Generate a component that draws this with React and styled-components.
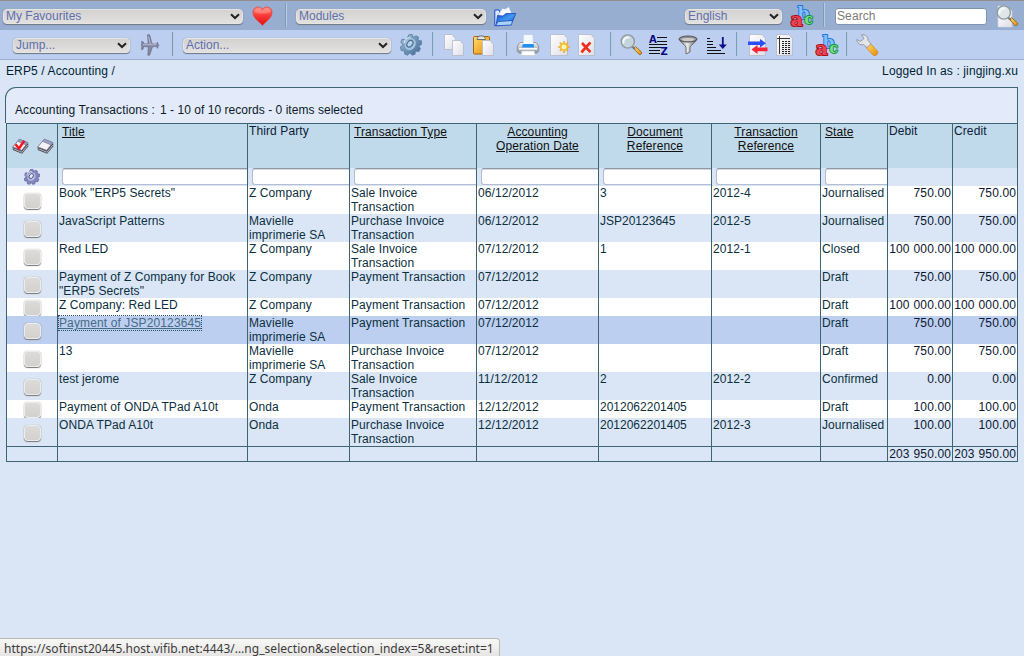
import React from "react";
import styled, { createGlobalStyle } from "styled-components";

const Global = createGlobalStyle`
  * { box-sizing: border-box; }
  html, body { margin: 0; height: 100%; }
  body {
    background: #dae6f6;
    color: #0c2f40;
    font: 12px/14px "Liberation Sans", Arial, sans-serif;
    overflow: hidden;
  }
  #root { height: 100%; }
`;

const Page = styled.div`
  height: 656px;
  width: 1024px;
  display: flex;
  flex-direction: column;
`;
const MainBar = styled.header`
  height: 30px;
  flex: none;
  border-top: 1px solid #8f8e8d;
  background: #97aed0;
  display: flex;
  align-items: flex-start;
  padding-left: 3px;
`;
const ContextBar = styled.nav`
  height: 30px;
  flex: none;
  border-bottom: 1px solid #97aed0;
  background: #bdcff0;
  display: flex;
  align-items: flex-start;
  padding-left: 13px;
`;
const SelectBox = styled.div`
  flex: none;
  width: ${(p) => p.$width}px;
  height: 15px;
  margin: 8px 0 0 ${(p) => p.$gap || 0}px;
  padding: 0 2px;
  border: 1px solid #e6e5e4;
  border-radius: 4px;
  background: linear-gradient(#d3d2d0, #e2e1df);
  box-shadow: 0 1px 1px #6c7685, 0 0 1px #8995a8;
  color: #5f6fae;
  line-height: 13px;
  display: flex;
  justify-content: space-between;
  align-items: center;
`;
const Divider = styled.i`
  flex: none;
  width: 2px;
  height: 24px;
  margin: 2px 0 0 ${(p) => p.$gap}px;
  background: linear-gradient(90deg, #76a0b9 50%, #b9cbe3 50%);
`;
const IconButton = styled.span`
  flex: none;
  width: 22px;
  height: 22px;
  margin: 4px 0 0 ${(p) => p.$gap}px;
  svg { display: block; overflow: visible; }
`;
const SearchInput = styled.input`
  flex: none;
  width: 152px;
  height: 17px;
  margin: 7px 0 0 10px;
  padding: 0 1px 1px;
  border: 1px solid #7f93b3;
  border-radius: 3px;
  background: #fff;
  font: inherit;
  letter-spacing: 0.1px;
  outline: 0;
  &::placeholder { color: #7b7b7b; opacity: 1; }
`;
const Crumbs = styled.div`
  flex: none;
  display: flex;
  justify-content: space-between;
  height: 27px;
  padding: 4px 6px 0;
  color: #001f33;
  letter-spacing: 0.12px;
`;
const Panel = styled.section`
  flex: none;
  height: 36px;
  margin: 0 6px 0 5px;
  padding: 15px 0 0 9px;
  border: 1px solid #3c6473;
  border-bottom: 0;
  border-radius: 11px 0 0 0;
  background: #e3eafa;
  color: #0b1b28;
  display: flex;
  gap: 5px;
`;
const PanelTitle = styled.span`
  letter-spacing: 0.1px;
`;
const PanelCount = styled.span`
  letter-spacing: 0.04px;
`;
const Grid = styled.table`
  flex: none;
  width: 1012px;
  margin-left: 6px;
  table-layout: fixed;
  border-collapse: separate;
  border-spacing: 0;
  border: solid #3c6473;
  border-width: 1px 1px 1px 0;
  letter-spacing: 0.08px;
`;
const Row = styled.tr`
  height: ${(p) => p.$height}px;
  background: ${(p) => p.$bg || "transparent"};
`;
const Cell = styled.td`
  height: inherit;
  padding: 0 0 0 1px;
  border-left: 1px solid #3c6473;
  vertical-align: top;
  letter-spacing: ${(p) => (p.$digits ? "0" : "inherit")};
`;
const NumberCell = styled(Cell)`
  padding: 0 1px 0 0;
  text-align: right;
  white-space: nowrap;
  word-spacing: 0.6px;
  letter-spacing: 0.12px;
  color: #0b1630;
`;
const TotalCell = styled(NumberCell)`
  border-top: 1px solid #3c6473;
`;
const HeadCell = styled.th`
  padding: ${(p) => (p.$sortable ? "1px 4px 0" : "0 0 0 1px")};
  border-left: 1px solid #3c6473;
  vertical-align: top;
  font-weight: normal;
  text-align: ${(p) => (p.$center ? "center" : "left")};
  color: #0c2036;
  letter-spacing: 0.1px;
`;
const SortLink = styled.span`
  color: #101010;
  text-decoration: underline;
`;
const SelectTools = styled.div`
  display: flex;
  gap: 8px;
  padding: 14px 0 0 4px;
`;
const IconCell = styled(Cell)`
  text-align: center;
  padding: 0;
  svg { display: block; margin: 1px auto 0 17px; }
`;
const Filter = styled.div`
  width: calc(100% - 3px);
  height: 17px;
  margin: 0 0 0 3px;
  border: 1px solid #b3bed2;
  border-top: 1px solid #8f96a8;
  border-right: 0;
  border-radius: 3px 0 0 3px;
  box-shadow: inset 0 1px 0 #d5d8e0;
  background: #fff;
`;
const CheckCell = styled(Cell)`
  padding: 1px 0 0;
  vertical-align: middle;
`;
const Check = styled.div`
  width: 17px;
  height: 16px;
  margin: 0 auto 0 17px;
  border: 1px solid #ececeb;
  border-radius: 4px;
  background: linear-gradient(#dcdbd9, #d2d1ce);
  box-shadow: 0 1px 1px #777, 0 0 1px #8a8a8a;
`;
const Focused = styled.span`
  display: inline-block;
  height: 14px;
  color: #456b86;
  text-decoration: underline;
  letter-spacing: 0.12px;
  outline: 1px dotted #2d5060;
`;
const StatusBar = styled.footer`
  width: 500px;
  height: 18px;
  margin-top: auto;
  padding: 1px 0 0 4px;
  border: solid #bab8b6;
  border-width: 1px 1px 0 0;
  border-radius: 0 4px 0 0;
  background: linear-gradient(#f8f8f7, #e6e5e3);
  color: #3b3b3b;
  font: 12px/17px "Noto Sans", sans-serif;
  letter-spacing: 0.03px;
  white-space: nowrap;
`;

const Svg = ({ children, size = 22, box = 22 }) => (
  <svg width={size} height={size} viewBox={`0 0 ${box} ${box}`} fill="none">{children}</svg>
);
const Chevron = () => (
  <svg width="10" height="7" viewBox="0 0 10 7" fill="none">
    <path d="M1 1.200 5 5l4-3.800" stroke="#222" strokeWidth="2" />
  </svg>
);
const DefsSvg = styled.svg`
  position: absolute;
`;
const Defs = () => (
  <DefsSvg width="0" height="0">
    <defs>
      <linearGradient id="heart" x2="0" y2="1"><stop stopColor="#ff8a80" /><stop offset=".45" stopColor="#fb3a38" /><stop offset="1" stopColor="#e01010" /></linearGradient>
      <linearGradient id="gold" x2="1" y2="1"><stop stopColor="#ffe06a" /><stop offset="1" stopColor="#e58a10" /></linearGradient>
      <linearGradient id="paper" x2="1" y2="1"><stop stopColor="#fff" /><stop offset="1" stopColor="#dedeea" /></linearGradient>
      <linearGradient id="steel" x2="1" y2="1"><stop stopColor="#a9c4dc" /><stop offset=".5" stopColor="#6d94b8" /><stop offset="1" stopColor="#46698f" /></linearGradient>
      <linearGradient id="blue" x2="1" y2="1"><stop stopColor="#1646c8" /><stop offset=".5" stopColor="#3f9bf2" /><stop offset="1" stopColor="#1040c0" /></linearGradient>
      <linearGradient id="metal"><stop stopColor="#666" /><stop offset=".45" stopColor="#eee" /><stop offset="1" stopColor="#555" /></linearGradient>
      <linearGradient id="casing" x2="0" y2="1"><stop stopColor="#f0f1f3" /><stop offset="1" stopColor="#8f949e" /></linearGradient>
    </defs>
  </DefsSvg>
);
const Heart = () => (
  <Svg>
    <path d="M10.500 20.500C8.500 17.500 1 13.500 1 7.500 1 4 3.500 2 6.200 2c2 0 3.500 1 4.300 2.400C11.300 3 13 2 15 2c2.800 0 5 2.200 5 5.300 0 6.200-7.500 10.200-9.500 13.200z" fill="url(#heart)" stroke="#e53b3b" strokeWidth=".7" />
    <path d="M2.500 7c0-3 3-4.500 5.500-3.500 1.200.6 2 1.800 2.500 2.700.6-1.500 2-3 4-3 2.500 0 4 1.800 4 3.800-5 2-11 2-16 0z" fill="#ff9a90" opacity=".55" />
  </Svg>
);
const Folder = () => (
  <Svg>
    <path d="M.8 5H5l1 2v13.500H.8z" fill="#dcecff" stroke="#1a4cc4" />
    <path d="m4 10 4.500-7 2.500 1 4-2.500 3 7.500v6H4z" fill="#f5f8ff" stroke="#91a9dd" strokeWidth=".7" />
    <path d="M3.500 10.500 9 11l3-2.500h9.800L18.500 16.500 2 20.500z" fill="url(#blue)" stroke="#1238b0" strokeWidth=".7" />
    <path d="m1.500 20.800 2.500-4.300 14.500-1-1 4.500z" fill="#a9d3fb" stroke="#1744ba" strokeWidth=".8" />
  </Svg>
);
const Letter = styled.text`
  font: bold ${(p) => p.$size}px "DejaVu Serif", serif;
  paint-order: stroke;
  stroke-width: 1.8px;
  stroke-linejoin: round;
`;
const Abc = () => (
  <Svg>
    <Letter $size={17} x="6.500" y="13.800" fill="#7fc0ff" stroke="#2270d6">b</Letter>
    <Letter $size={19} x="-.6" y="20.800" fill="#ee4450" stroke="#a80c1c">a</Letter>
    <Letter $size={14} x="13.500" y="19.200" fill="#7ade88" stroke="#129035">c</Letter>
  </Svg>
);
const Lens = ({ page }) => (
  <Svg>
    {page && <path d="M2 1h9l5 5v16H2z" fill="url(#paper)" stroke="#d0d3da" strokeWidth=".6" />}
    <path d="m13.500 14.500 2-2 6 5.500c.8 1.500-1 3.200-2.300 2.500z" fill="url(#gold)" stroke="#8b5b15" strokeWidth=".8" />
    <path d="m12 12.500 3 2.500" stroke="#777" strokeWidth="2" />
    <circle cx="7.800" cy="7.500" r="6.600" fill={page ? "#dfe8e9" : "#c5d3dc"} stroke="#909a9d" strokeWidth="1.400" />
    <path d="M3.500 8.500c-.5-3 2-5.500 5-5" stroke="#f4fafb" strokeWidth="2" strokeLinecap="round" />
  </Svg>
);
const Plane = () => (
  <Svg>
    <path d="M7.500.800h2.200l2.300 9 5 .4V8.500h.8v2l1.400.8-1.400.8v2H17v-1.800l-4.500.5-2.800 8.400H7.800l.5-8.200-4.300-.5-1.200 3H1.500l.3-3.500L1 11l.8-1 -.3-2.600h1.300L4.500 10l3.700-.2z" fill="#8488a2" stroke="#62667f" strokeWidth=".6" />
    <path d="M8.500 2.500 10.500 10M2.500 10.700h14" stroke="#bdc0d0" strokeWidth=".9" />
  </Svg>
);
const Gear = ({ size = 22, small }) => (
  <Svg size={size}>
    <path d="m7.500 3.500 1.500-3 3.500.2.500 2.800 3-1.700 2.500 1.200-.5 3.500 3.500.3v3.700l-2.800 1.500 1.800 2.500-1.500 3-3.500-.3-.5 3.200-3 .8-2-2.400-2.500 2.400-3-1.200.2-3-3.500-.5L.300 13l2.600-2.200L.800 8.200 2.200 5l3.500.800z" fill={small ? "#8286bb" : "url(#steel)"} stroke={small ? "#565a94" : "#5b7f9f"} strokeWidth=".8" />
    <ellipse cx="10.300" cy="10.300" rx="5.200" ry="6.300" transform="rotate(35 10.300 10.300)" fill={small ? "#b7badf" : "#a3c3dd"} />
    <ellipse cx="9.800" cy="9.800" rx="2.600" ry="3.700" transform="rotate(35 10 10)" fill={small ? "#e5eafa" : "#bdcff0"} stroke={small ? "#464a7c" : "#4b6f93"} strokeWidth="1.200" />
    <path d="M4 9c1-4 4-6 7-5" stroke="#dceaf6" strokeWidth="1.200" />
  </Svg>
);
const Sheet = ({ x = 0, y = 0, w = 11, h = 15 }) => (
  <g transform={`translate(${x} ${y})`}>
    <path d={`M.5.500H${w - 4}L${w - 0.5} 4.500V${h - 0.5}H.5z`} fill="url(#paper)" stroke="#b4b8c4" strokeWidth=".8" />
    <path d={`M${w - 4}.5v4h3.500z`} fill="#d9dae0" stroke="#a9acb8" strokeWidth=".5" />
  </g>
);
const Copy = () => <Svg><Sheet x={1} w={12} h={16} /><Sheet x={9} y={6} w={12} h={16} /></Svg>;
const Paste = () => (
  <Svg>
    <rect x="1.500" y="2.500" width="16" height="17.500" rx="1" fill="url(#gold)" stroke="#a36310" />
    <path d="M5 5.500c0-2 1.500-2 2-3.500h4.500c.5 1.500 2 1.500 2 3.500z" fill="#e5e5e5" stroke="#6d6d6d" />
    <Sheet x={10} y={6} w={12} h={16} />
  </Svg>
);
const Printer = () => (
  <Svg>
    <path d="M3 8.500h16l2.700 3.500v5.500l-2 1.500H2.300l-2-1.500V12z" fill="url(#casing)" stroke="#848994" strokeWidth=".8" />
    <path d="M6.500.5h9.500l.5 11H6z" fill="#f2f9ff" stroke="#b7c6d5" strokeWidth=".6" />
    <path d="m5.500 11 1-1h9.500l1 1v2.500h-12z" fill="#2090f0" />
    <path d="M2 14.800h18" stroke="#f8f9fa" strokeWidth="1.600" />
    <path d="m5 17-1 4.500h14.500L17 17z" fill="#fff" stroke="#c7cbd2" strokeWidth=".8" />
  </Svg>
);
const NewDoc = () => (
  <Svg>
    <Sheet x={2} w={18} h={22} />
    <path d="m16 7 1.200 3 3-1.500-1.300 3L22 13l-3.100 1 1.300 3-3-1.300L16 19l-1.200-3.300-3 1.300 1.300-3L10 13l3.100-1.500-1.300-3 3 1.500z" fill="#ffc936" stroke="#e8a019" strokeWidth=".6" />
    <circle cx="16" cy="13" r="2.300" fill="#fff7be" />
  </Svg>
);
const DeleteDoc = () => (
  <Svg><Sheet x={2} w={17} h={22} /><path d="M6 9c3 3 5 6 8.500 9M14.500 8.500C11 12 8 15 5.500 18.500" stroke="#f02c1c" strokeWidth="2.600" /></Svg>
);
const SortLetter = styled.text`
  font: bold 10px "DejaVu Sans", sans-serif;
  fill: #0a0a80;
`;
const SortAz = () => (
  <Svg>
    <SortLetter x="2" y="8.500">A</SortLetter>
    <path d="M10 3.500h10M10 7.500h10M2 10.500h18M2 13.500h18M2 16.500h11M2 19.500h11" stroke="#111" strokeWidth="1.200" />
    <SortLetter x="13.500" y="21">Z</SortLetter>
  </Svg>
);
const Funnel = () => (
  <Svg>
    <path d="M2 5c1 3 6 6 7 8v7l4-2v-5c1-2 6-5 7-8z" fill="url(#metal)" stroke="#555" strokeWidth=".8" />
    <ellipse cx="11" cy="5" rx="9" ry="3" fill="#8d8e8e" stroke="#555" />
    <ellipse cx="11" cy="5.500" rx="6.500" ry="1.600" fill="#ccc" />
  </Svg>
);
const SortDown = () => (
  <Svg>
    <path d="M1 4.500h3M1 7.500h6M1 10.500h6M1 13.500h9M1 16.500h14M1 19.500h18" stroke="#111" strokeWidth="1.200" />
    <path d="M16.800 3v10" stroke="#0d0d85" strokeWidth="1.800" /><path d="M12.800 10.500h8L16.800 15z" fill="#0d0d85" />
  </Svg>
);
const Exchange = () => (
  <Svg>
    <Sheet x={2} w={17} h={22} />
    <path d="M1 7.500h12V5l6 4.200-6 4.300v-2.500H1z" fill="#2e4df2" />
    <path d="M20.500 13.500h-10V11L4.500 15.500l6 4.500v-2.800h10z" fill="#fa2338" />
  </Svg>
);
const Columns = () => (
  <Svg>
    <Sheet x={2} w={17} h={22} />
    <path d="M3 4.500h13M5.500 2v18" stroke="#333" />
    <path d="M8 7.500h2m1 0h2m1 0h2M8 9.500h2m1 0h2m1 0h2M8 11.500h2m1 0h2m1 0h2M8 13.500h2m1 0h2m1 0h2M8 15.500h2m1 0h2m1 0h2M8 17.500h2m1 0h2m1 0h2M8 19.500h2m1 0h2m1 0h2" stroke="#222" />
  </Svg>
);
const Wrench = () => (
  <Svg>
    <path d="m10 13.500 4.300-4.200 7.200 8c1.200 2.500-1.800 5.400-4.200 4z" fill="url(#gold)" stroke="#d18a15" strokeWidth=".8" />
    <path d="M5.500.8c4-.5 7 2 6.500 5.500l3 3.500-4 3.800-3.500-3C4 11.500 1 9 .8 5.500l3.800 2L8 4.500z" fill="#e3e5e9" stroke="#8d929e" strokeWidth=".9" />
  </Svg>
);
const Pad = ({ checked }) => (
  <Svg size={17}>
    <path d="m9 3 12 4v4L13 20.500 1 15.500V12z" fill="#4c4d58" />
    <path d="m2 14 11 4.500L20.500 9" stroke="#d5d6df" />
    <path d="M9.500 1.500 20.500 6 12.500 16 1 11.500z" fill="#f4f4f8" stroke="#70738a" />
    <path d="M9.500 1.500 20.500 6 18 9 7 4.500z" fill="#9a9dc6" stroke="#70738a" strokeWidth=".6" />
    {checked && <path d="m4.500 8 4.500 5.500L16 3.500" stroke="#f0161c" strokeWidth="3.200" />}
  </Svg>
);

const COLUMNS = [
  { label: "Title", width: 190, sortable: true, filter: true },
  { label: "Third Party", width: 102, filter: true },
  { label: "Transaction Type", width: 127, sortable: true, filter: true },
  { label: "Accounting Operation Date", width: 122, sortable: true, center: true, filter: true },
  { label: "Document Reference", width: 113, sortable: true, center: true, filter: true },
  { label: "Transaction Reference", width: 109, sortable: true, center: true, filter: true },
  { label: "State", width: 67, sortable: true, filter: true },
  { label: "Debit", width: 65 },
  { label: "Credit", width: 65 },
];
const DOCUMENT_COLUMN = 4;
const SALE = "Sale Invoice Transaction";
const PURCHASE = "Purchase Invoice Transaction";
const PAYMENT = "Payment Transaction";
const MAV = "Mavielle imprimerie SA";
const ROWS = [
  ['Book "ERP5 Secrets"', "Z Company", SALE, "06/12/2012", "3", "2012-4", "Journalised", "750.00"],
  ["JavaScript Patterns", MAV, PURCHASE, "06/12/2012", "JSP20123645", "2012-5", "Journalised", "750.00"],
  ["Red LED", "Z Company", SALE, "07/12/2012", "1", "2012-1", "Closed", "100 000.00"],
  ['Payment of Z Company for Book "ERP5 Secrets"', "Z Company", PAYMENT, "07/12/2012", "", "", "Draft", "750.00"],
  ["Z Company: Red LED", "Z Company", PAYMENT, "07/12/2012", "", "", "Draft", "100 000.00"],
  ["Payment of JSP20123645", MAV, PAYMENT, "07/12/2012", "", "", "Draft", "750.00"],
  ["13", MAV, PURCHASE, "07/12/2012", "", "", "Draft", "750.00"],
  ["test jerome", "Z Company", SALE, "11/12/2012", "2", "2012-2", "Confirmed", "0.00"],
  ["Payment of ONDA TPad A10t", "Onda", PAYMENT, "12/12/2012", "2012062201405", "", "Draft", "100.00"],
  ["ONDA TPad A10t", "Onda", PURCHASE, "12/12/2012", "2012062201405", "2012-3", "Journalised", "100.00"],
];
const SHORT = [4, 8];
const ACTIVE = 5;

const Select = ({ label, ...rest }) => <SelectBox {...rest}><span>{label}</span><Chevron /></SelectBox>;

export default function App() {
  return (
    <Page>
      <Global />
      <Defs />
      <MainBar>
        <Select label="My Favourites" $width={240} />
        <IconButton $gap={9}><Heart /></IconButton>
        <Divider $gap={11} />
        <Select label="Modules" $width={190} $gap={9} />
        <IconButton $gap={8}><Folder /></IconButton>
        <Select label="English" $width={97} $gap={169} />
        <IconButton $gap={9}><Abc /></IconButton>
        <Divider $gap={10} />
        <SearchInput placeholder="Search" />
        <IconButton $gap={9}><Lens page /></IconButton>
      </MainBar>
      <ContextBar>
        <Select label="Jump..." $width={117} />
        <IconButton $gap={10}><Plane /></IconButton>
        <Divider $gap={10} />
        <Select label="Action..." $width={208} $gap={9} />
        <IconButton $gap={9}><Gear /></IconButton>
        <Divider $gap={10} />
        <IconButton $gap={9}><Copy /></IconButton>
        <IconButton $gap={7}><Paste /></IconButton>
        <Divider $gap={12} />
        <IconButton $gap={9}><Printer /></IconButton>
        <IconButton $gap={9}><NewDoc /></IconButton>
        <IconButton $gap={6}><DeleteDoc /></IconButton>
        <Divider $gap={12} />
        <IconButton $gap={8}><Lens /></IconButton>
        <IconButton $gap={5}><SortAz /></IconButton>
        <IconButton $gap={8}><Funnel /></IconButton>
        <IconButton $gap={7}><SortDown /></IconButton>
        <Divider $gap={8} />
        <IconButton $gap={9}><Exchange /></IconButton>
        <IconButton $gap={5}><Columns /></IconButton>
        <Divider $gap={10} />
        <IconButton $gap={8}><Abc /></IconButton>
        <Divider $gap={8} />
        <IconButton $gap={8}><Wrench /></IconButton>
      </ContextBar>
      <Crumbs>
        <span>ERP5 / Accounting /</span>
        <span>Logged In as : jingjing.xu</span>
      </Crumbs>
      <Panel>
        <PanelTitle>Accounting Transactions :</PanelTitle>
        <PanelCount>1 - 10 of 10 records - 0 items selected</PanelCount>
      </Panel>
      <Grid>
        <colgroup>
          <col style={{ width: 51 }} />
          {COLUMNS.map((c) => <col key={c.label} style={{ width: c.width }} />)}
        </colgroup>
        <thead>
          <Row $height={44} $bg="#c0daeb">
            <HeadCell><SelectTools><Pad checked /><Pad /></SelectTools></HeadCell>
            {COLUMNS.map((c) => (
              <HeadCell key={c.label} $sortable={c.sortable} $center={c.center}>
                {c.sortable ? <SortLink>{c.label}</SortLink> : c.label}
              </HeadCell>
            ))}
          </Row>
          <Row $height={18}>
            <IconCell><Gear size={16} small /></IconCell>
            {COLUMNS.map((c) => <Cell key={c.label}>{c.filter && <Filter />}</Cell>)}
          </Row>
        </thead>
        <tbody>
          {ROWS.map((r, i) => (
            <Row
              key={i}
              $height={SHORT.includes(i) ? 18 : 28}
              $bg={i === ACTIVE ? "#bdcff0" : i % 2 ? "#dae6f6" : "#fff"}
            >
              <CheckCell><Check /></CheckCell>
              {r.slice(0, 7).map((t, j) => (
                <Cell key={j} $digits={j === DOCUMENT_COLUMN}>
                  {i === ACTIVE && j === 0 ? <Focused>{t}</Focused> : t}
                </Cell>
              ))}
              <NumberCell>{r[7]}</NumberCell>
              <NumberCell>{r[7]}</NumberCell>
            </Row>
          ))}
          <Row $height={15}>
            {Array.from({ length: 8 }, (_, i) => <TotalCell key={i} />)}
            <TotalCell>203 950.00</TotalCell>
            <TotalCell>203 950.00</TotalCell>
          </Row>
        </tbody>
      </Grid>
      <StatusBar>https://softinst20445.host.vifib.net:4443/…ng_selection&amp;selection_index=5&amp;reset:int=1</StatusBar>
    </Page>
  );
}
